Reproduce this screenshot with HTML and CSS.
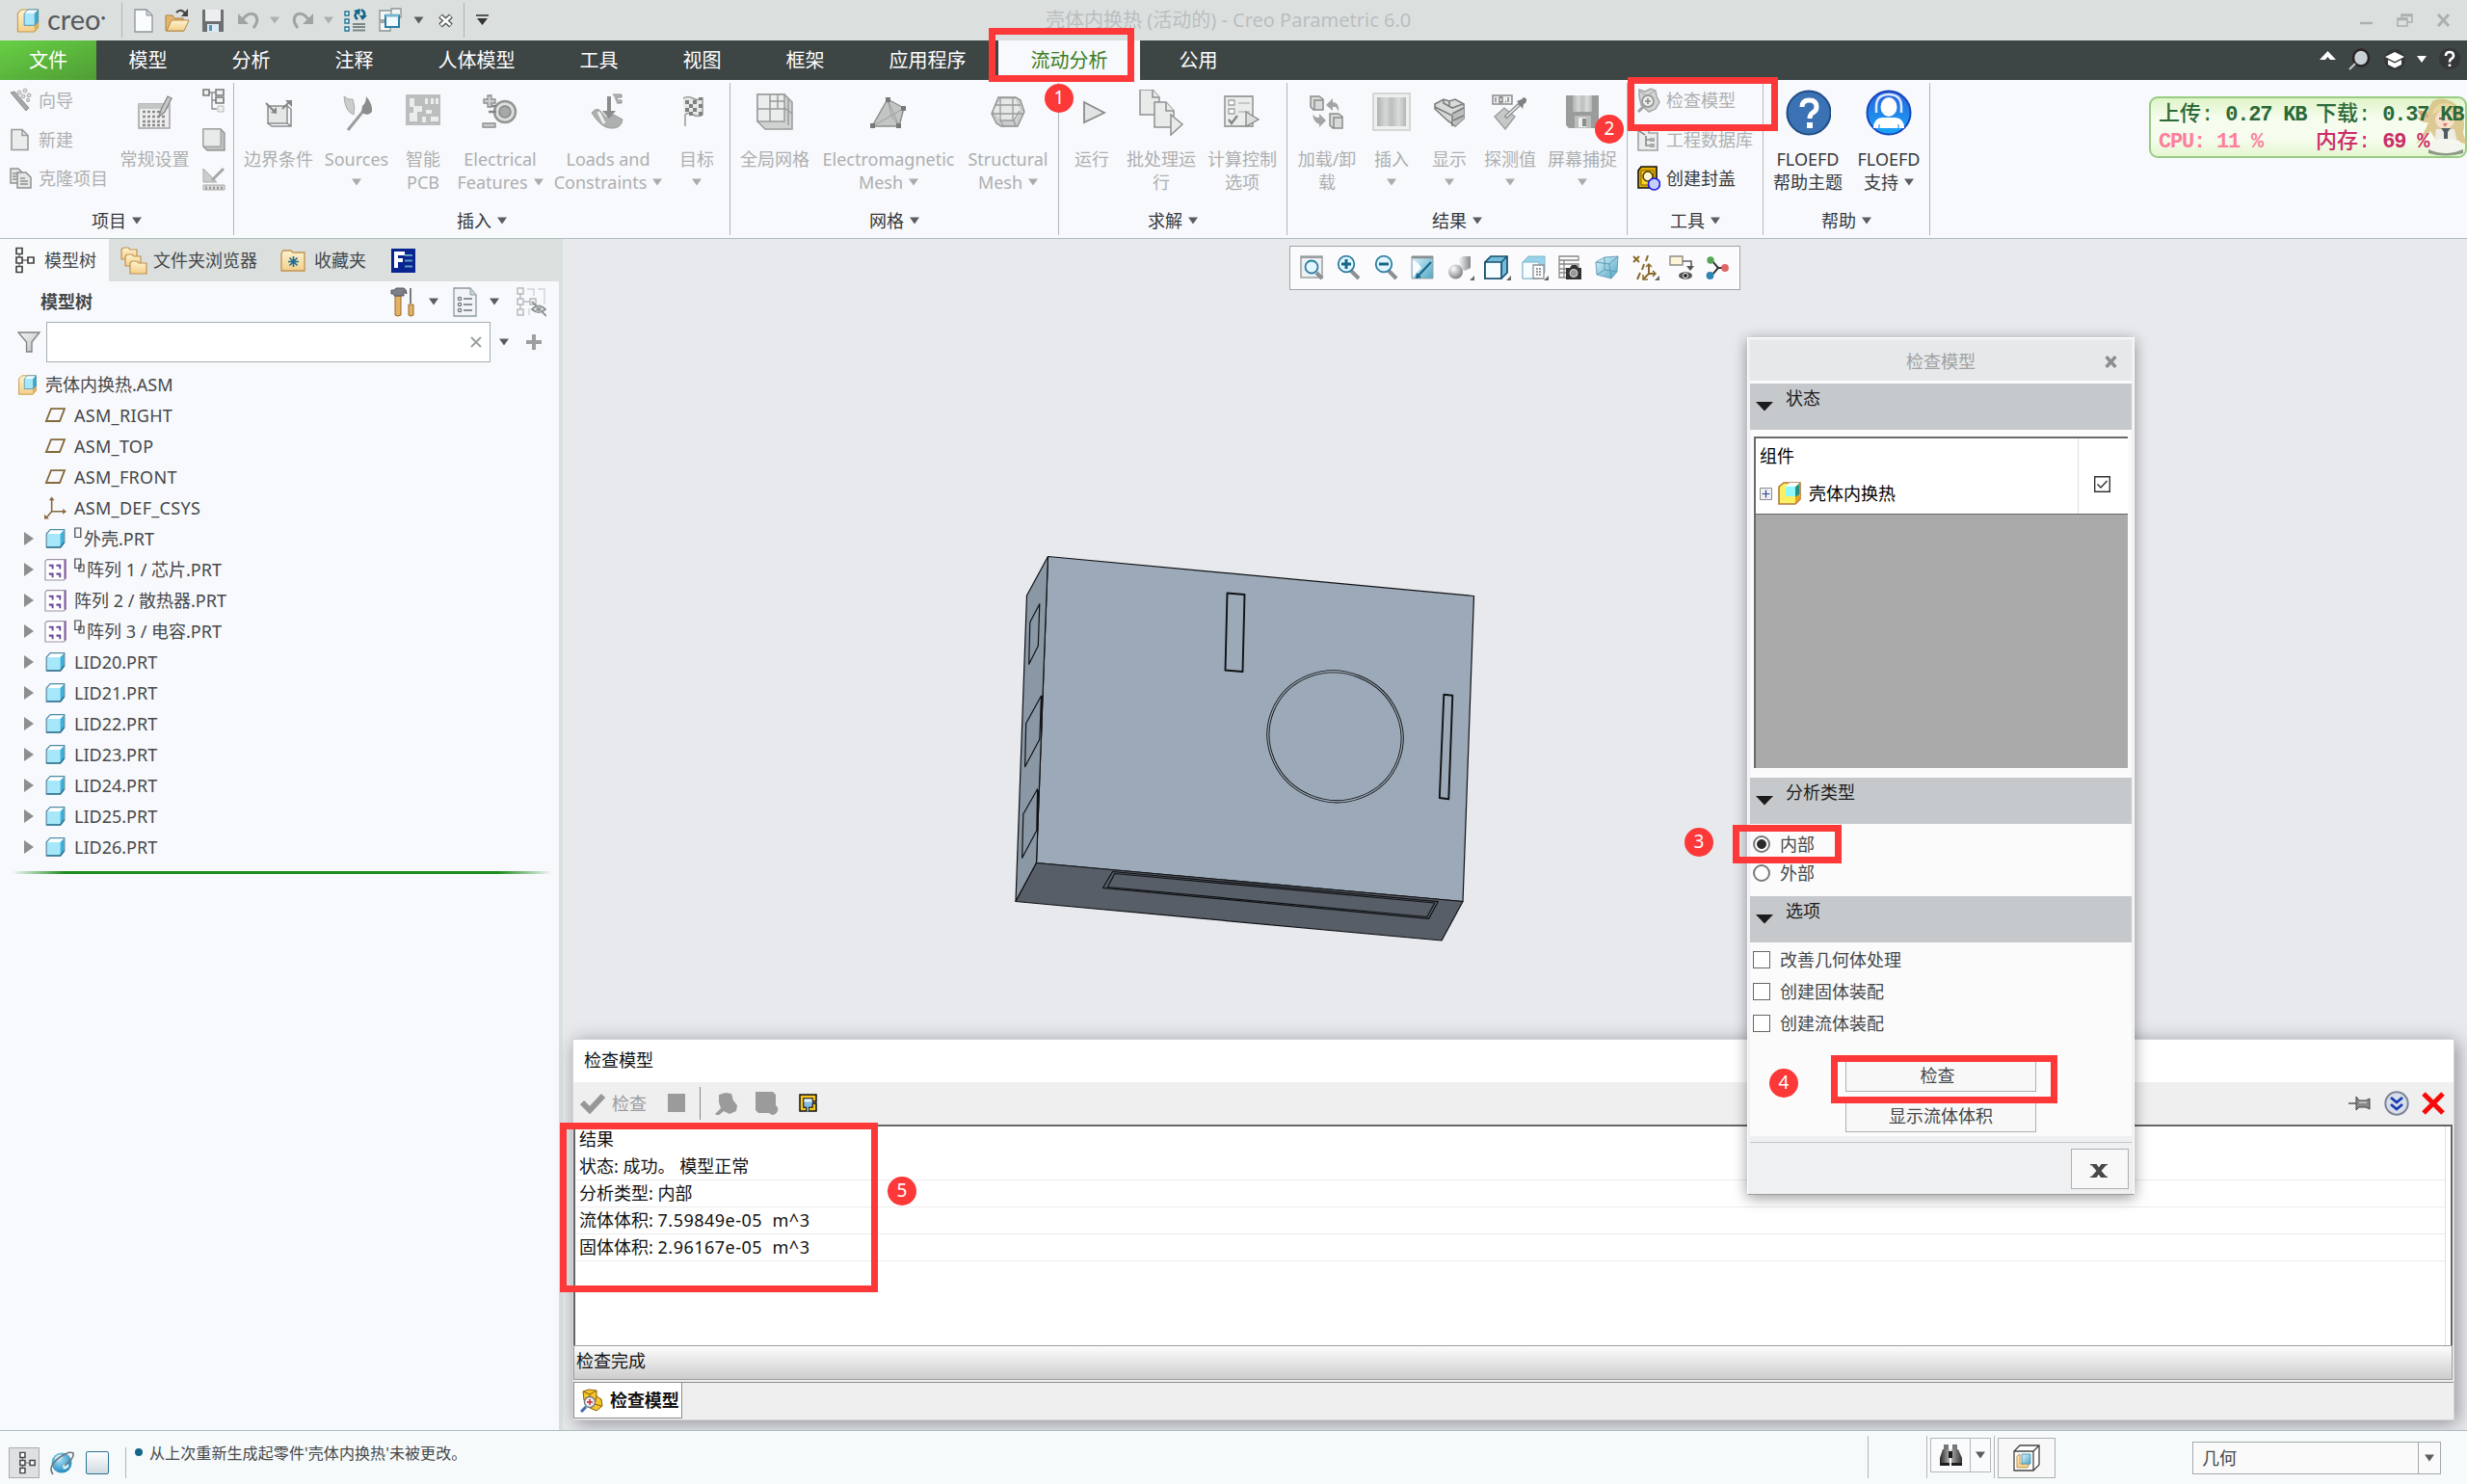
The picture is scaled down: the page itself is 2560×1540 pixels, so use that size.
FILE: index.html
```html
<!DOCTYPE html>
<html lang="zh-CN">
<head>
<meta charset="utf-8">
<title>壳体内换热 (活动的) - Creo Parametric 6.0</title>
<link rel="stylesheet" href="styles.css">
</head>
<body>
<svg class="defs" width="0" height="0">
  <defs>
    <linearGradient id="gGold" x1="0" y1="0" x2="0" y2="1"><stop offset="0" stop-color="#fff3d0"/><stop offset="1" stop-color="#f3cf8a"/></linearGradient>
    <linearGradient id="gGrey" x1="0" y1="0" x2="1" y2="1"><stop offset="0" stop-color="#f4f4f4"/><stop offset="1" stop-color="#bcbebe"/></linearGradient>
    <linearGradient id="gDark" x1="0" y1="0" x2="1" y2="0"><stop offset="0" stop-color="#222"/><stop offset=".45" stop-color="#bbb"/><stop offset="1" stop-color="#333"/></linearGradient>
    <linearGradient id="gBlue" x1="0" y1="0" x2="1" y2="1"><stop offset="0" stop-color="#dff3fa"/><stop offset="1" stop-color="#4fa6c6"/></linearGradient>
    <linearGradient id="gPane" x1="0" y1="0" x2="1" y2="0"><stop offset="0" stop-color="#b0b2b2"/><stop offset=".3" stop-color="#d6d8d8"/><stop offset=".5" stop-color="#bcbebe"/><stop offset=".75" stop-color="#dadcdc"/><stop offset="1" stop-color="#b4b6b6"/></linearGradient>
    <radialGradient id="gBall" cx=".35" cy=".3" r=".8"><stop offset="0" stop-color="#fff"/><stop offset="1" stop-color="#707476"/></radialGradient>
    <linearGradient id="gCyl" x1="0" y1="0" x2="1" y2="0"><stop offset="0" stop-color="#fff"/><stop offset="1" stop-color="#85898b"/></linearGradient>
    <linearGradient id="gUser" x1="0" y1="0" x2="0" y2="1"><stop offset="0" stop-color="#2a62da"/><stop offset="1" stop-color="#18a6fa"/></linearGradient>
    <radialGradient id="gGlobe" cx=".4" cy=".35" r=".7"><stop offset="0" stop-color="#a8e0f8"/><stop offset="1" stop-color="#1b84b8"/></radialGradient>
  </defs>
  <symbol id="down" viewBox="0 0 10 8"><path d="M0 .5h10L5 7.5z" fill="currentColor"/></symbol>
  <symbol id="right" viewBox="0 0 10 14"><path d="M0 0v14l10-7z" fill="#8c8e90"/></symbol>
  <symbol id="asm" viewBox="0 0 24 26"><path d="M1 5l4-4h18v19l-4 5H1z" fill="url(#gGold)" stroke="#c89a4c" stroke-width="1.2"/><path d="M19 25l4-5V4l-4 3z" fill="#dfae5c"/><path d="M8 5l4-4h11l-4 4z" fill="#f2fbff"/><path d="M8 5h11v13H8z" fill="#a8e6fb"/><path d="M19 5l4-4v13l-4 4z" fill="#3fa9d0"/><path d="M8 5l4-4h11v13l-4 4H8z" fill="none" stroke="#3a90b4" stroke-width=".9"/></symbol>
  <symbol id="cube" viewBox="0 0 20 20"><path d="M1 5l4-4h14l-4 4z" fill="#fff"/><path d="M1 5h14v14H1z" fill="#a6e8fa"/><path d="M15 5l4-4v13l-4 5z" fill="#3fb0da"/><path d="M.7 5l4-4.3h14.600v13.300l-4 5.200H.7z" fill="none" stroke="#4d8aa5" stroke-width="1.2"/><path d="M1 18.800h14l4-5" fill="none" stroke="#2a6d8c" stroke-width="1.300"/></symbol>
  <symbol id="plane" viewBox="0 0 22 16"><path d="M6.500 1.200h14L15.500 14H1.400z" fill="none" stroke="#84693a" stroke-width="1.800"/></symbol>
  <symbol id="pattern" viewBox="0 0 24 24"><path d="M1 2.500L3 .7h20.300v20L21.500 23H1z" fill="#fff" stroke="#9c94a6" stroke-width="1.200"/><path d="M22.300 1v20.500" stroke="#8863a8" stroke-width="2"/><path d="M5 6h5v5H8V8H5zM13 6h5v5h-2V8h-3zM5 15h5v5H8v-2.500H5zM13 15h5v5h-2v-2.500h-3z" fill="#6b489c"/></symbol>
  <symbol id="treeico" viewBox="0 0 20 28"><path d="M4 6v16M4 14h9" stroke="#777" fill="none" stroke-width="1.300"/><path d="M1 1.500h6v6H1zM1 11h6v6H1zM1 20.500h6v6H1zM13 11h6v6h-6z" fill="#fff" stroke="#444" stroke-width="1.700"/></symbol>
</svg>

<div class="app">
  <header class="titlebar">
    <div class="brand"><svg width="24" height="25"><use href="#asm"/></svg><span class="brand-name">creo<i>•</i></span></div>
    <div class="quick">
      <svg width="20" height="25" viewBox="0 0 20 25"><path d="M1 1h12l6 6v17H1z" fill="#fbfcfd" stroke="#8b9599" stroke-width="1.300"/><path d="M13 1v6h6z" fill="#ccd6da" stroke="#8b9599"/></svg>
      <svg width="26" height="26" viewBox="0 0 26 26"><path d="M1 24V8h7l2 3h9v13z" fill="#e4b66d" stroke="#ab7d3c"/><path d="M2 24l5-11h18l-5 11z" fill="url(#gGold)" stroke="#b4874a"/><path d="M12 5q5-5 9 1" fill="none" stroke="#444" stroke-width="2.200"/><path d="M24 1v8h-7z" fill="#444"/></svg>
      <svg width="24" height="25" viewBox="0 0 24 25"><path d="M1 1h22v23H1z" fill="#6c7072"/><path d="M4 1h16v12H4z" fill="#eceeef"/><path d="M6 16h12v8H6z" fill="#dcebf2"/><path d="M8 17h3v6H8z" fill="#5095ba"/></svg>
      <svg width="24" height="20" viewBox="0 0 24 20"><path d="M6 9Q12 1 18 4q6 5-1 14" fill="none" stroke="#a0a4a5" stroke-width="3"/><path d="M1 3v11h11z" fill="#a0a4a5"/></svg>
      <svg class="dim" width="10" height="8"><use href="#down"/></svg>
      <svg width="24" height="20" viewBox="0 0 24 20"><path d="M18 9Q12 1 6 4q-6 5 1 14" fill="none" stroke="#a0a4a5" stroke-width="3"/><path d="M23 3v11H12z" fill="#a0a4a5"/></svg>
      <svg class="dim" width="10" height="8"><use href="#down"/></svg>
      <svg width="24" height="26" viewBox="0 0 24 26"><path d="M1 4h4v4H1zM1 12h4v4H1zM1 20h4v4H1z" fill="#eef8fc" stroke="#1d7399" stroke-width="1.400"/><path d="M9 17h13M9 20h13M9 23.500h13" stroke="#7c8587" stroke-width="1.800"/><path d="M14 12q-5-4 0-8M18 2q5 3 2 8" fill="none" stroke="#15658a" stroke-width="2.600"/><path d="M10 3l7-2-1 7zM16 8h8l-5 5z" fill="#15658a" /></svg>
      <svg width="24" height="26" viewBox="0 0 24 26"><path d="M1 3h12v10H1zM13 1h10v9H13zM1 15h11v9H1z" fill="#f4f6f6" stroke="#8b9294" stroke-width="1.300"/><path d="M7 8h14v12H7z" fill="#f2fbff" stroke="#2b7ea3" stroke-width="2"/><path d="M7 8h14" stroke="#76b5d0" stroke-width="3"/></svg>
      <svg class="mid" width="11" height="8"><use href="#down"/></svg>
      <svg width="17" height="15" viewBox="0 0 17 15"><path d="M3 2.500l11 10M14 2.500l-11 10" stroke="#55595b" stroke-width="5.500"/><path d="M3.500 3l10 9M13.500 3l-10 9" stroke="#fff" stroke-width="2.600"/></svg>
      <span class="quick-end"><svg width="13" height="12" viewBox="0 0 13 12"><path d="M0 1h13" stroke="#333" stroke-width="1.600"/><path d="M1 4h11l-5.500 7z" fill="#333"/></svg></span>
    </div>
    <h1 class="title">壳体内换热 (活动的) - Creo Parametric 6.0</h1>
    <svg class="winctl" width="96" height="16" viewBox="0 0 96 16" fill="none" stroke="#abb0b1"><path d="M1 11h13" stroke-width="2.500"/><path d="M40 6h10v8H40zM44 6V2h11v8h-5M40 7.500h10M44 3.500h11" stroke-width="1.500"/><path d="M82 2l11 12M93 2L82 14" stroke-width="3"/></svg>
  </header>

  <nav class="menubar">
    <span class="tab file">文件</span><span class="tab">模型</span><span class="tab">分析</span><span class="tab">注释</span><span class="tab">人体模型</span><span class="tab">工具</span><span class="tab">视图</span><span class="tab">框架</span><span class="tab">应用程序</span><span class="tab active">流动分析</span><span class="tab">公用</span>
    <svg class="menu-tools" width="150" height="30" viewBox="2405 48 150 30"><path d="M2407 62l8.500-9 8.500 9h-6l-2.500-3-2.500 3z" fill="#fff"/><ellipse cx="2450" cy="60" rx="8" ry="8.500" fill="#c8d2d6" stroke="#2a2225" stroke-width="2.500"/><path d="M2444 66l-6 6" stroke="#c8caca" stroke-width="2"/><circle cx="2485" cy="62" r="11" fill="#353839"/><path d="M2475 59l10-5 10 5-10 5zM2478 62l7 3.500 7-3.500v5l-7 3.500-7-3.500z" fill="#fff"/><path d="M2508 58h10l-5 7z" fill="#fff"/><circle cx="2542" cy="61" r="11" fill="#343637"/><path d="M2538 58q0-4 4-4t4 4q0 2-3 3.500-1 1-1 3M2542 66.500v2.500" fill="none" stroke="#fff" stroke-width="2.600"/></svg>
  </nav>

  <section class="ribbon">
    <div class="group project">
      <div class="body">
        <div class="stack">
          <div class="mini"><svg width="24" height="26" viewBox="0 0 24 26"><path d="M1 5l4-1 15 17-3 3z" fill="#a6a8a8" stroke="#8b8d8d"/><g fill="#ddd" stroke="#aaa"><circle cx="10" cy="5" r="2"/><circle cx="16" cy="3" r="2"/><circle cx="20" cy="8" r="2"/><circle cx="14" cy="9" r="2"/><circle cx="19" cy="13" r="1.600"/></g></svg>向导</div>
          <div class="mini"><svg width="24" height="24" viewBox="0 0 24 24"><path d="M2 1.500h11l6 6v15H2z" fill="#ebecec" stroke="#999b9b" stroke-width="1.600"/><path d="M13 1.500v6h6" fill="none" stroke="#999b9b" stroke-width="1.400"/></svg>新建</div>
          <div class="mini"><svg width="24" height="24" viewBox="0 0 24 24"><g fill="#e6e7e7" stroke="#8f9191" stroke-width="1.500"><path d="M1 2h8l4 4v11H1z"/><path d="M8 6h9l5 5v11H8z"/></g><path d="M3 7h5M3 10h4M3 13h4M11 12h5M11 15h8M11 18h8" stroke="#8f9191" stroke-width="1.300"/></svg>克隆项目</div>
        </div>
        <div class="big"><svg viewBox="-24 -24 48 48"><path d="M-17-9h32v25h-32z" fill="#eee" stroke="#a0a2a2" stroke-width="1.500"/><path d="M-17-9h32v5h-32z" fill="#c4c6c6"/><path d="M-13-1h24M-13 4h24M-13 9h24M-13 13h24" stroke="#8b8d8d" stroke-width="2.600" stroke-dasharray="3 2"/><path d="M4 4l2-7 7-14 4 2-7 14z" fill="#c8caca" stroke="#858787" stroke-width="1.300"/></svg><b>常规设置</b></div>
        <div class="stack icons">
          <svg width="24" height="25" viewBox="0 0 24 25"><path d="M7 4h6M10 4v17h5M10 12h5" fill="none" stroke="#8b8d8d" stroke-width="1.400"/><path d="M1 1h6v6H1zM14 1h8v6h-8zM14 9h8v6h-8z" fill="#eee" stroke="#777979" stroke-width="1.600"/><path d="M16 18h6v6h-6z" fill="#eee" stroke="#bbb"/></svg>
          <svg width="24" height="24" viewBox="0 0 24 24"><path d="M1 1h18l4 4v18H5l-4-4z" fill="#bfc1c1" stroke="#949696" stroke-width="1.400"/><path d="M1 1h18v18H1z" fill="#e9eaea" stroke="#949696"/></svg>
          <svg width="24" height="25" viewBox="0 0 24 25"><path d="M1 2v14h14z" fill="#ccc" stroke="#aaa"/><path d="M10 14L22 2" stroke="#a6a8a8" stroke-width="3"/><path d="M1 19h22v5H1z" fill="#ddd" stroke="#a6a8a8"/><path d="M3 22h18" stroke="#999" stroke-width="3" stroke-dasharray="2 2"/></svg>
        </div>
      </div>
      <div class="caption">项目<svg><use href="#down"/></svg></div>
    </div>

    <div class="group insert">
      <div class="body">
        <div class="big"><svg viewBox="-24 -24 48 48"><path d="M-11-7H9v18h-20z" fill="#e6e7e7" stroke="#8b8d8d" stroke-width="1.500"/><path d="M9-7l4 3v18H-7l-4-3M9 11l4 3" fill="none" stroke="#8b8d8d" stroke-width="1.500"/><path d="M-13-10L-4-1M4-4l8-8" stroke="#858787" stroke-width="2"/><path d="M-2 1v-7l-6 6zM14-13H7l7 7z" fill="#858787"/></svg><b>边界条件</b></div>
        <div class="big"><svg viewBox="-24 -24 48 48"><path d="M-13-17q4 4 9 3 3 8 1 16-9-3-10-19z" fill="#cbcdcd" stroke="#aaacac"/><path d="M-9 18L8-3" stroke="#9b9d9d" stroke-width="3"/><path d="M6-7q4-3 4-10 7 8 6 16-5 6-11 0z" fill="#8b8d8d"/></svg><b>Sources</b><svg class="arrow"><use href="#down"/></svg></div>
        <div class="big"><svg viewBox="-24 -24 48 48"><path d="M-18-19h36v32h-36z" fill="#bcbebe"/><path d="M-14-15h5v8h8v6h-5v10h-8V0h4v-6h-4zM2-15h3v6H2zM8-15h3v6H8zM13-15h3v6h-3zM3-3h6v4H3zM8 4h8v5H8zM-1 4h4v6h-4z" fill="#ebecec"/></svg><b>智能</b><b>PCB</b></div>
        <div class="big"><svg viewBox="-24 -24 48 48"><circle cx="5" cy="-1" r="11" fill="#dcdede" stroke="#939595" stroke-width="2.500"/><circle cx="5" cy="-1" r="6" fill="#a6a8a8" stroke="#858787" stroke-width="1.500"/><path d="M-12-7h8M-12-1h8" stroke="#858787" stroke-width="2.500"/><path d="M-13-18h4v4h4v4h-4v4h-4v-4h-4v-4h4zM-18 11h13v4h-13z" fill="#ccc" stroke="#8b8d8d" stroke-width="1.300"/></svg><b>Electrical</b><b>Features<svg class="arrow"><use href="#down"/></svg></b></div>
        <div class="big"><svg viewBox="-24 -24 48 48"><path d="M-17 0q5-6 9-2l6 7 8-3 9 5q-1 10-13 9-10-1-19-16z" fill="#aeb0b0" stroke="#999b9b"/><path d="M-10-1l6 12" stroke="#eee" stroke-width="3"/><path d="M-1-17h4v15h5L1 6l-7-8h5z" fill="#8b8d8d"/><path d="M5-19h9v3H9v3h5v3H9" fill="#b6b8b8" stroke="#8b8d8d"/></svg><b>Loads and</b><b>Constraints<svg class="arrow"><use href="#down"/></svg></b></div>
        <div class="big"><svg viewBox="-24 -24 48 48"><path d="M-14-15q5-3 10 0t10 0V2q-5 3-10 0t-8 0v12" fill="#e6e7e7" stroke="#999b9b" stroke-width="1.500"/><path d="M-12-13h4v4h-4zM-4-13h4v4h-4zM2-9h4v4H2zM-8-9h4v4h-4zM-12-5h4v4h-4zM-4-5h4v4h-4zM2-1h4v4H2zM-8-1h4v4h-4zM2-16h4v3H2z" fill="#7f8181"/></svg><b>目标</b><svg class="arrow"><use href="#down"/></svg></div>
      </div>
      <div class="caption">插入<svg><use href="#down"/></svg></div>
    </div>

    <div class="group mesh">
      <div class="body">
        <div class="big"><svg viewBox="-24 -24 48 48"><path d="M-18-19h28l8 8v28h-28l-8-8z" fill="#d0d2d2" stroke="#999b9b" stroke-width="1.500"/><path d="M-18-19h28V9h-28z" fill="#ebecec" stroke="#999b9b" stroke-width="1.500"/><path d="M-5-19V9M-18-4h28M3-19v15M-5-12h15M14-15v28M10-5l8 6" stroke="#999b9b" fill="none" stroke-width="1.500"/></svg><b>全局网格</b></div>
        <div class="big"><svg viewBox="-24 -24 48 48"><path d="M-1-14L16-5 11 14h-28z" fill="#c3c5c5" stroke="#8b8d8d" stroke-width="1.400"/><path d="M-1-14L3 3l13-8M3 3l8 11M3 3l-20 11M-1-14l12 28" fill="none" stroke="#9c9e9e"/><path d="M-3-16h5v5h-5zM13-7h5v5h-5zM8 11h5v5H8zM-19 11h5v5h-5z" fill="#777979"/></svg><b>Electromagnetic</b><b>Mesh<svg class="arrow"><use href="#down"/></svg></b></div>
        <div class="big"><svg viewBox="-24 -24 48 48"><path d="M-10-16H8l5 3 4 12-7 15H-7l-5-3-5-10z" fill="#ccc" stroke="#8b8d8d" stroke-width="1.300"/><path d="M-8-14H8l5 12-5 10H-8l-7-10z" fill="#e6e7e7"/><path d="M-8-15V8M5-15V8M-14-8h27M-16 1h32M-8 8H6l6-10M-8 8l4 7M6 8l2 6" fill="none" stroke="#999b9b" stroke-width="1.300"/></svg><b>Structural</b><b>Mesh<svg class="arrow"><use href="#down"/></svg></b></div>
      </div>
      <div class="caption">网格<svg><use href="#down"/></svg></div>
    </div>

    <div class="group solve">
      <div class="body">
        <div class="big"><svg viewBox="-24 -24 48 48"><path d="M-8-11L13 0-8 10z" fill="#e2e3e3" stroke="#8b8d8d" stroke-width="1.800"/></svg><b>运行</b></div>
        <div class="big"><svg viewBox="-24 -24 48 48"><g fill="#e9eaea" stroke="#8f9191" stroke-width="1.500"><path d="M-22-24h13l7 8v18h-20z"/><path d="M-9-24v8h7M-7-11H5l8 9v17H-7z"/><path d="M5-11v9h8M10 2l12 10-12 11z"/></g></svg><b>批处理运</b><b>行</b></div>
        <div class="big"><svg viewBox="-24 -24 48 48"><path d="M-18-17h29v31h-29z" fill="#ebecec" stroke="#a0a2a2" stroke-width="1.800"/><path d="M-14-13h6v5h-6zM-14-4h6v5h-6z" fill="#fff" stroke="#a0a2a2" stroke-width="1.300"/><path d="M-4-10H8M-4-1H8" stroke="#bbb" stroke-width="1.400"/><path d="M-14 7l3 4 6-8" fill="none" stroke="#858787" stroke-width="2.300"/><path d="M4-1l13 8-13 7z" fill="#ddd" stroke="#8b8d8d" stroke-width="1.400"/></svg><b>计算控制</b><b>选项</b></div>
      </div>
      <div class="caption">求解<svg><use href="#down"/></svg></div>
    </div>

    <div class="group results">
      <div class="body">
        <div class="big"><svg viewBox="-24 -24 48 48"><g fill="#d8dada" stroke="#8b8d8d" stroke-width="1.500"><path d="M-17-17h9l4 3v11h-10l-3-3zM-13-13h9v10h-9zM3 1h9l4 3v12H6l-3-3zM7 5h9v11H7z"/></g><path d="M-1-8l7-7v4q7 0 6 10-2-6-6-5v4zM-1 8l-7-7v4q-7 0-6-6-2 10 6 13v3z" fill="#a4a6a6"/></svg><b>加载/卸</b><b>载</b></div>
        <div class="big"><svg viewBox="-24 -24 48 48"><path d="M-19-20h38v38h-38z" fill="#eef0f0" stroke="#d5d7d7" stroke-width="2"/><path d="M-15-16h30v30h-30z" fill="url(#gPane)"/></svg><b>插入</b><svg class="arrow"><use href="#down"/></svg></div>
        <div class="big"><svg viewBox="-24 -24 48 48"><path d="M-15-9l9-5 6 2 6-2 9 5v15l-9 8-8-6-13-12z" fill="#d8dada" stroke="#7c7e7e" stroke-width="1.600"/><path d="M3 0l12-7v13l-9 8z" fill="#bbbdbd"/><path d="M-15-6L3 3v11M3 1l12-6M-6-14v4l9 5 11-4M0-12v5M4 8l11-5" fill="none" stroke="#7c7e7e" stroke-width="1.600"/></svg><b>显示</b><svg class="arrow"><use href="#down"/></svg></div>
        <div class="big"><svg viewBox="-24 -24 48 48"><path d="M-18-18H2v9h-20z" fill="#eee" stroke="#8b8d8d" stroke-width="1.500"/><path d="M-15-16v5M-11-16h3v5h-3zM-5-11.500h1M-2-16v5" stroke="#777" stroke-width="1.300" fill="none"/><path d="M-16 4L-6-5 5 4-5 17z" fill="#c6c8c8" stroke="#999b9b" stroke-width="1.300"/><path d="M-5 5L10-9" stroke="#8b8d8d" stroke-width="4"/><path d="M-4 4L9-8" stroke="#eee" stroke-width="1.500"/><path d="M7-12l5-2 2-2q5 1 2 6l-2 1-1 5z" fill="#7f8181"/></svg><b>探测值</b><svg class="arrow"><use href="#down"/></svg></div>
        <div class="big"><svg viewBox="-24 -24 48 48"><path d="M-17-18h34v34h-31l-3-3z" fill="#9a9c9c"/><path d="M-10-18H10v17h-20z" fill="url(#gPane)"/><path d="M-8 3H9v13H-8z" fill="#bcbebe"/><path d="M-4 5h8v10h-8z" fill="#eee"/><path d="M0 6h4v8H0z" fill="#8b8d8d"/></svg><b>屏幕捕捉</b><svg class="arrow"><use href="#down"/></svg></div>
      </div>
      <div class="caption">结果<svg><use href="#down"/></svg></div>
    </div>

    <div class="group tools">
      <div class="body">
        <div class="stack">
          <div class="mini"><svg width="24" height="26" viewBox="0 0 24 26"><path d="M2 2l6 2 6-3 5 2 1 6 3 6-4 7-7 3-8-7-2-9z" fill="#d2d4d4" stroke="#a6a8a8" stroke-width="1.500"/><path d="M3 4l7 5 8-6M10 9v6" stroke="#b0b2b2" fill="none" stroke-width="1.300"/><circle cx="11" cy="14" r="6" fill="#eee" stroke="#979999" stroke-width="1.800"/><path d="M8 14h6M11 11v6" stroke="#888" stroke-width="1.600"/><path d="M7 19l-6 6" stroke="#a0a2a2" stroke-width="3"/></svg>检查模型</div>
          <div class="mini"><svg width="24" height="24" viewBox="0 0 24 24"><path d="M1 2h11v3h9v18H1z" fill="#ebecec" stroke="#a0a2a2" stroke-width="1.600"/><path d="M2 3l6 4" stroke="#777" stroke-width="1.500"/><path d="M9 8v10h5M9 12h5" stroke="#8b8d8d" fill="none" stroke-width="1.700"/><path d="M13 10h5v4h-5zM13 16h5v4h-5z" fill="#aaa"/></svg>工程数据库</div>
          <div class="mini dark"><svg width="24" height="26" viewBox="0 0 24 26"><path d="M1 5l3-4h16v17l-3 5H1z" fill="#e4ac00" stroke="#111" stroke-width="1.600"/><path d="M4 5h13v15H4z" fill="#fbd52c" stroke="#7c5b00"/><circle cx="11" cy="11" r="5" fill="#fff7d0" stroke="#4a3a00" stroke-width="1.500"/><circle cx="17.500" cy="19" r="6" fill="#c5cdfa" stroke="#1212ee" stroke-width="1.600"/></svg>创建封盖</div>
        </div>
      </div>
      <div class="caption">工具<svg><use href="#down"/></svg></div>
    </div>

    <div class="group help">
      <div class="body">
        <div class="big dark"><svg viewBox="-25 -24 48 48"><circle r="22.500" fill="#3a72b4" stroke="#1f4c86" stroke-width="2"/><path d="M-7-6q0-7 7.500-7T8-6q0 4-4 6-3 2-3 6" fill="none" stroke="#fff" stroke-width="5"/><path d="M-2 10h6v6h-6z" fill="#fff"/></svg><b>FLOEFD</b><b>帮助主题</b></div>
        <div class="big dark"><svg viewBox="-24 -24 48 48"><circle r="22.500" fill="url(#gUser)" stroke="#1745bd" stroke-width="2"/><path d="M-13 0v-6q0-13 13-13T13-6v6" fill="none" stroke="#dce9ff" stroke-width="2.500"/><ellipse cy="-6" rx="8.500" ry="10" fill="#fff"/><path d="M-16 16q0-10 9-11h14q9 1 9 11z" fill="#fff"/><path d="M-10 16v-4M10 16v-4" stroke="#38a2f4" stroke-width="1.300"/></svg><b>FLOEFD</b><b>支持<svg class="arrow"><use href="#down"/></svg></b></div>
      </div>
      <div class="caption">帮助<svg><use href="#down"/></svg></div>
    </div>
  </section>

  <main class="workspace">
    <aside class="sidebar">
      <div class="side-tabs">
        <span class="side-tab on"><svg width="20" height="28"><use href="#treeico"/></svg>模型树</span>
        <span class="side-tab folders"><svg width="28" height="29" viewBox="0 0 28 29"><g fill="url(#gGold)" stroke="#c0924f" stroke-width="1.200"><path d="M1 3l2-2h5l2 2h7v10H1z"/><path d="M5 10l2-2h5l2 2h7v10H5z"/><path d="M10 17l2-2h5l2 2h8v11H10z"/></g></svg>文件夹浏览器</span>
        <span class="side-tab favs"><svg width="26" height="24" viewBox="0 0 26 24"><path d="M1 5l2-3h8l2 2h12v19H1z" fill="url(#gGold)" stroke="#c0924f" stroke-width="1.300"/><path d="M13.500 8v11M8 13.500h11M9.500 9.500l8 8M17.500 9.500l-8 8" stroke="#1d6c93" stroke-width="1.600"/></svg>收藏夹</span>
        <svg class="fe" width="25" height="25" viewBox="0 0 25 25"><path d="M0 0h25v25H0z" fill="#0a2490"/><path d="M5 20V5h9M5 12h7" fill="none" stroke="#fff" stroke-width="4"/><path d="M14 7h8M14 12.500h8M14 18.500h8" stroke="#5aa0c0" stroke-width="2.200"/></svg>
      </div>
      <div class="side-head"><strong>模型树</strong>
        <svg width="26" height="31" viewBox="0 0 26 31"><path d="M5 9h6v20q-3 2-6 0z" fill="#e3b266" stroke="#96682a"/><path d="M1 3h3l2-2h8q3 1 3 6l-3-2v4H4V7H1z" fill="#7c8088" stroke="#555960"/><path d="M21 1v16" stroke="#777b80" stroke-width="2"/><path d="M19 18h5v11q-2 2-5 0z" fill="#e3b266" stroke="#96682a"/></svg>
        <svg class="mid a1" width="10" height="8"><use href="#down"/></svg>
        <svg class="listico" width="25" height="31" viewBox="0 0 25 31"><path d="M1 1h17l6 7v22H1z" fill="#f2f5f7" stroke="#8e9aa0" stroke-width="1.300"/><path d="M18 1v7h6" fill="#ccd4d8" stroke="#8e9aa0"/><g fill="none" stroke="#6c7375" stroke-width="1.200"><circle cx="7" cy="12" r="1.700"/><circle cx="7" cy="18" r="1.700"/><circle cx="7" cy="24" r="1.700"/></g><path d="M11 12h9M11 18h9M11 24h9" stroke="#6c7375" stroke-width="1.600"/></svg>
        <svg class="mid a2" width="10" height="8"><use href="#down"/></svg>
        <svg class="hideico" width="31" height="31" viewBox="0 0 31 31" fill="none" stroke="#b4b9ba" stroke-width="1.400"><path d="M1 1h6v6H1zM1 12h6v6H1zM1 23h6v6H1zM14 12h6v6h-6zM7 15h7M4 7v5M4 18v5"/><path d="M11 2h7v7M22 2h7v16M13 22v7" stroke="#d0d4d5"/><path d="M16 23q7-7 14 0-7 6-14 0zM16 15l15 15" stroke="#8c9192" stroke-width="1.800"/><circle cx="23" cy="23" r="2.500" fill="#8c9192"/></svg>
      </div>
      <div class="filter">
        <svg width="24" height="22" viewBox="0 0 24 22"><path d="M1 1h22l-8 10v10H9.500V11z" fill="url(#gGrey)" stroke="#7c8284" stroke-width="1.300"/></svg>
        <div class="field"><svg width="12" height="12" viewBox="0 0 12 12"><path d="M1 1l10 10M11 1L1 11" stroke="#9b9fa0" stroke-width="1.800"/></svg></div>
        <svg class="mid" width="10" height="8"><use href="#down"/></svg>
        <svg class="plus" width="16" height="16" viewBox="0 0 16 16"><path d="M8 0v16M0 8h16" stroke="#9b9fa0" stroke-width="4"/></svg>
      </div>
      <ul class="tree">
        <li class="root"><svg width="21" height="21"><use href="#asm"/></svg>壳体内换热.ASM</li>
        <li class="datum"><svg class="ico" height="16"><use href="#plane"/></svg>ASM_RIGHT</li>
        <li class="datum"><svg class="ico" height="16"><use href="#plane"/></svg>ASM_TOP</li>
        <li class="datum"><svg class="ico" height="16"><use href="#plane"/></svg>ASM_FRONT</li>
        <li class="datum"><svg class="ico" height="25" viewBox="0 0 24 25"><path d="M8 2v14h14M8 16l-6 7" fill="none" stroke="#84693a" stroke-width="1.600"/><path d="M5 4l3-4 3 4zM20 13l4 3-4 3zM0 19v5h5z" fill="#84693a"/></svg>ASM_DEF_CSYS</li>
        <li class="exp"><svg class="tri"><use href="#right"/></svg><svg class="ico" height="20"><use href="#cube"/></svg><svg class="mk" width="8" height="20" viewBox="0 0 8 20"><path d="M.8 1h6v9.500h-6z" fill="none" stroke="#444" stroke-width="1.200"/></svg>外壳.PRT</li>
        <li class="exp"><svg class="tri"><use href="#right"/></svg><svg class="ico" height="25"><use href="#pattern"/></svg><svg class="mk wide" width="11" height="20" viewBox="0 0 11 20"><path d="M.8 1h6v9.500h-6zM5 7h5v7H5z" fill="#f8f9fc" stroke="#444" stroke-width="1.200"/></svg>阵列 1 / 芯片.PRT</li>
        <li class="exp"><svg class="tri"><use href="#right"/></svg><svg class="ico" height="25"><use href="#pattern"/></svg>阵列 2 / 散热器.PRT</li>
        <li class="exp"><svg class="tri"><use href="#right"/></svg><svg class="ico" height="25"><use href="#pattern"/></svg><svg class="mk wide" width="11" height="20" viewBox="0 0 11 20"><path d="M.8 1h6v9.500h-6zM5 7h5v7H5z" fill="#f8f9fc" stroke="#444" stroke-width="1.200"/></svg>阵列 3 / 电容.PRT</li>
        <li class="exp"><svg class="tri"><use href="#right"/></svg><svg class="ico" height="20"><use href="#cube"/></svg>LID20.PRT</li>
        <li class="exp"><svg class="tri"><use href="#right"/></svg><svg class="ico" height="20"><use href="#cube"/></svg>LID21.PRT</li>
        <li class="exp"><svg class="tri"><use href="#right"/></svg><svg class="ico" height="20"><use href="#cube"/></svg>LID22.PRT</li>
        <li class="exp"><svg class="tri"><use href="#right"/></svg><svg class="ico" height="20"><use href="#cube"/></svg>LID23.PRT</li>
        <li class="exp"><svg class="tri"><use href="#right"/></svg><svg class="ico" height="20"><use href="#cube"/></svg>LID24.PRT</li>
        <li class="exp"><svg class="tri"><use href="#right"/></svg><svg class="ico" height="20"><use href="#cube"/></svg>LID25.PRT</li>
        <li class="exp"><svg class="tri"><use href="#right"/></svg><svg class="ico" height="20"><use href="#cube"/></svg>LID26.PRT</li>
      </ul>
      <div class="insert-line"></div>
    </aside>

    <div class="viewport">
      <svg class="scene" viewBox="584 248 1976 1236" fill="none" stroke="#101214" stroke-width="1.200" stroke-linejoin="round">
        <path d="M1087.500 577.500L1529.500 618.500 1518 935.500 1075.500 895.500z" fill="#9ca9b8"/>
        <path d="M1087.500 577.500L1065.500 618 1054 935.500 1075.500 895.500z" fill="#8a97a5"/>
        <path d="M1054 935.500L1075.500 895.500 1518 935.500 1496 976z" fill="#585e68"/>
        <path d="M1273.500 615.500l18 1.500-2 80-18-1.500zM1498.300 720.700l9 1-4 107.500-9.500-1.200z" stroke-width="1.900"/>
        <ellipse cx="1385.500" cy="764.300" rx="71" ry="68" transform="rotate(22 1385.500 764.300)" stroke-width=".9"/>
        <ellipse cx="1385.500" cy="764.300" rx="68.800" ry="65.800" transform="rotate(22 1385.500 764.300)" stroke-width=".9"/>
        <path d="M1078.800 626.700l-10 19-1.100 43.600 9.600-19zM1080.500 722l-15.800 28.700-1.100 45 15.200-28.400zM1076.600 818.700L1061.800 845l-1.100 45.300 15.100-28.600zM1081.500 722l-1 45M1077.600 820l-1 42"/>
        <path d="M1154.600 904.500l337.700 31.200-9.600 17.600-338.100-32z"/>
        <path d="M1156.800 906.500l332 30.500-8 14.500-331.400-31z"/>
      </svg>

      <div class="viewbar">
        <svg viewBox="0 0 28 26"><path d="M1 1h22v22H1z" fill="#eef1f2" stroke="#9aa0a2" stroke-width="1.500"/><path d="M1 2h22" stroke="#9aa0a2" stroke-width="2"/><path d="M17 18l6 6" stroke="#8b9092" stroke-width="4"/><circle cx="12" cy="12" r="6.500" fill="#e4f6fd" stroke="#2b7ea3" stroke-width="1.800"/></svg>
        <svg viewBox="0 0 28 26"><path d="M14 15l9 9" stroke="#8b9092" stroke-width="4"/><circle cx="10" cy="9" r="8.300" fill="#e4f6fd" stroke="#2b7ea3" stroke-width="1.800"/><path d="M5 9h10M10 4v10" stroke="#15658a" stroke-width="3"/></svg>
        <svg viewBox="0 0 28 26"><path d="M14 15l9 9" stroke="#8b9092" stroke-width="4"/><circle cx="10" cy="9" r="8.300" fill="#e4f6fd" stroke="#2b7ea3" stroke-width="1.800"/><path d="M5 9h10" stroke="#15658a" stroke-width="3"/></svg>
        <svg viewBox="0 0 28 26"><path d="M1 1h22v23H1z" fill="url(#gBlue)" stroke="#9aa0a2"/><path d="M2 23V5q5 1 9 8z" fill="#f6fcff"/><path d="M21 7L6 23" stroke="#15658a" stroke-width="2.200"/><path d="M5 24l1-6 5 5z" fill="#15658a"/><path d="M1 2h22" stroke="#888e90" stroke-width="2.500"/></svg>
        <svg viewBox="0 0 28 26"><path d="M11 4l5-3h8v12l-6 3-7-3z" fill="url(#gCyl)"/><circle cx="8.500" cy="17" r="7.500" fill="url(#gBall)"/><path d="M28 21v5h-5z" fill="#666"/></svg>
        <svg viewBox="0 0 28 26"><path d="M1 7l6-6h17v17l-6 6H1z" fill="#73bddb" stroke="#15506e" stroke-width="1.700"/><path d="M1 7h17v17H1z" fill="#f7fcff" stroke="#15506e" stroke-width="1.700"/><path d="M18 7l6-6" stroke="#15506e" stroke-width="1.500"/><path d="M28 21v5h-5z" fill="#666"/></svg>
        <svg viewBox="0 0 28 26"><path d="M1 7l6-6h17v17l-6 6H1z" fill="#98d3ea" stroke="#7bb4ca"/><path d="M1 7h17v17H1z" fill="#f7fcff" stroke="#7bb4ca"/><path d="M12 10h11v14H12z" fill="#fff" stroke="#8b9092" stroke-width="1.300"/><path d="M15 14h6M15 17h6M15 20h6" stroke="#777" stroke-width="1.600" stroke-dasharray="2 1"/><path d="M28 21v5h-5z" fill="#666"/></svg>
        <svg viewBox="0 0 28 26"><path d="M1 1h20v4H1zM1 1v22h8M6 5v18M1 9h20v4M1 14h8M1 18h8" fill="#fff" stroke="#888" stroke-width="1.300"/><path d="M8 13h4l2-3h5l2 3h3v12H8z" fill="#333"/><circle cx="16" cy="18.500" r="4" fill="#999" stroke="#ddd"/></svg>
        <svg viewBox="0 0 28 26"><path d="M1 7l9-5 14-1-1 16-6 7-15-4z" fill="url(#gBlue)" stroke="#6aa3ba"/><path d="M1 7l14 2 9-8M15 9l2 15M10 2v13l13 2M10 15l-8 5" fill="none" stroke="#5b9bb5"/></svg>
        <svg viewBox="0 0 28 26" fill="none" stroke="#8a6a2c" stroke-width="2"><path d="M1 1l6 6M7 1L1 7M16 0l-2 6M12 9l-2 6M8 18l-3 7M17 10v9h7M17 19l-6 6"/><path d="M14 12l3-3 3 3M21 16l3 3-3 3M11 20v5h5" stroke-width="1.500"/><path d="M28 21v5h-5z" fill="#666" stroke="none"/></svg>
        <svg viewBox="0 0 28 26"><path d="M1 1h13v9H1z" fill="#fff4d8" stroke="#8d8c86" stroke-width="1.400"/><path d="M14 6h9v8" fill="none" stroke="#666" stroke-width="1.700"/><path d="M18 11l4 5 4-5z" fill="#555"/><ellipse cx="17" cy="21" rx="7" ry="3.800" fill="#555"/><circle cx="17" cy="21" r="2.500" fill="#222" stroke="#fff"/></svg>
        <svg viewBox="0 0 28 26"><path d="M6 5l7 8-7 8M13 13h8" fill="none" stroke="#333" stroke-width="2"/><circle cx="5" cy="5" r="3.700" fill="#57a556"/><circle cx="20" cy="13" r="3.900" fill="#e06565"/><circle cx="4.500" cy="21" r="3.900" fill="#2c86b5"/></svg>
      </div>

      <section class="dock">
        <div class="dock-title">检查模型</div>
        <div class="dock-tools">
          <svg width="26" height="22" viewBox="0 0 26 22"><path d="M2 10l8 8L24 3" fill="none" stroke="#979797" stroke-width="6"/></svg><span>检查</span>
          <i class="stop"></i><i class="bar"></i>
          <svg class="t1" width="24" height="24" viewBox="0 0 24 24" fill="#9b9b9b"><path d="M4 3l7-2 6 1 2 7 4 5-1 6-7 3-6-3-6 5-3-2 6-6-2-6z"/></svg>
          <svg class="t2" width="25" height="24" viewBox="0 0 25 24" fill="#9b9b9b"><path d="M1 0h18l3 3v11q3 2 2 6-2 4-6 4l-3-2H4l-3-3z"/></svg>
          <svg class="t3" width="19" height="19" viewBox="0 0 19 19"><path d="M1 1h17v7h-4V5H5v9h3v4H1zM10 18v-4h4v-4h4v8z" fill="#f6c61e" stroke="#111" stroke-width="1.500"/><path d="M5.500 5.500h8v8H10V18H8.500v-4.500h-3z" fill="#86bce8"/><path d="M5.500 5.500h8v3h-8z" fill="#e6f2fb"/></svg>
          <svg class="pin" width="24" height="18" viewBox="0 0 24 18"><path d="M0 9h9" stroke="#555" stroke-width="1.500"/><path d="M8 2l3 4h7l4-2v11l-4-2h-7l-3 3z" fill="#8a8a8a" stroke="#444"/><path d="M11 8h8" stroke="#eee"/></svg>
          <svg class="chev" width="26" height="26" viewBox="0 0 26 26"><circle cx="13" cy="13" r="11.700" fill="#d7dde9" stroke="#7c8597" stroke-width="2"/><path d="M7 7l6 5 6-5M7 14l6 5 6-5" fill="none" stroke="#173cb2" stroke-width="2.800"/></svg>
          <svg class="redx" width="24" height="24" viewBox="0 0 24 24"><path d="M2 2l20 20M22 2L2 22" stroke="#f80a0a" stroke-width="5"/></svg>
        </div>
        <div class="log"><div class="log-in"><p class="h">结果</p><p>状态: 成功。 模型正常</p><p>分析类型: 内部</p><p>流体体积: <span>7.59849e-05&nbsp; m^3</span></p><p>固体体积: <span>2.96167e-05&nbsp; m^3</span></p></div></div>
        <div class="dock-status">检查完成</div>
        <div class="dock-tabs"><div class="dock-tab"><svg width="24" height="25" viewBox="0 0 24 25"><path d="M3 3l6-2 8 1v6l5 3 1 7-6 5-7-3-6-8z" fill="#f4c62c" stroke="#8a5f00"/><path d="M3 3l7 3 7-4M10 6v7M17 8l-2 8 7 2" fill="none" stroke="#8a5f00"/><circle cx="10" cy="14" r="5.500" fill="#e8eefb" stroke="#777" stroke-width="1.400"/><path d="M7 14h6M10 11v6" stroke="#d22" stroke-width="1.500"/><path d="M6 19l-5 5" stroke="#3b66b8" stroke-width="3"/></svg>检查模型</div></div>
      </section>

      <section class="dialog">
        <div class="dlg-title">检查模型<svg width="13" height="13" viewBox="0 0 12 12"><path d="M1.500 1l9 10M10.500 1l-9 10" stroke="#8b8d8e" stroke-width="3.200"/></svg></div>
        <div class="dlg-body">
          <div class="sec"><svg width="18" height="10" viewBox="0 0 18 10"><path d="M0 0h18l-9 9.500z" fill="#1c1c1c"/></svg>状态</div>
          <div class="table">
            <div class="cells"><div class="c1"><p>组件</p><p class="r2"><svg width="13" height="13" viewBox="0 0 13 13"><path d="M.5.5h12v12H.5z" fill="#f0f0f2" stroke="#8c8c8c"/><path d="M2.500 6.500h8M6.500 2.500v8" stroke="#2a4a9a" stroke-width="1.200"/></svg><svg width="24" height="24" viewBox="0 0 24 24"><path d="M1 5l5-4h17v17l-5 5H1z" fill="#faf062" stroke="#b07a3c" stroke-width="1.600"/><path d="M18 22l5-5v-5l-5 4z" fill="#f0a010"/><path d="M8 5h10v10H8z" fill="#8ef8fa"/><path d="M18 5l4-3v11l-4 3z" fill="#24908e"/><path d="M8 5l4-4h10l-4 4z" fill="#fff"/></svg>壳体内换热</p></div><div class="c2"><svg width="17" height="17" viewBox="0 0 17 17"><path d="M.7.7h15.600v15.600H.7z" fill="#fff" stroke="#333" stroke-width="1.400"/><path d="M3.500 8.500l3.500 3.500L13.500 5" fill="none" stroke="#333" stroke-width="1.500"/></svg></div></div>
          </div>
          <div class="sec"><svg width="18" height="10" viewBox="0 0 18 10"><path d="M0 0h18l-9 9.500z" fill="#1c1c1c"/></svg>分析类型</div>
          <div class="radios">
            <label><i class="radio sel"></i>内部</label>
            <label><i class="radio"></i>外部</label>
          </div>
          <div class="sec"><svg width="18" height="10" viewBox="0 0 18 10"><path d="M0 0h18l-9 9.500z" fill="#1c1c1c"/></svg>选项</div>
          <div class="checks">
            <label><i class="box"></i>改善几何体处理</label>
            <label><i class="box"></i>创建固体装配</label>
            <label><i class="box"></i>创建流体装配</label>
          </div>
          <div class="actions"><div class="btn first">检查</div><div class="btn">显示流体体积</div></div>
        </div>
        <div class="dlg-foot"><div class="btn close"><svg width="18" height="14" viewBox="0 0 18 14"><path d="M0 0h6.500L9 3.500 11.500 0H18v1.200h-1.500L11.500 7l5 5.800H18V14h-7l-2.200-3.300L6.500 14H0v-1.200h1.500L6.500 7l-5-5.800H0z" fill="#484848"/></svg></div></div>
      </section>
    </div>
  </main>

  <footer class="status">
    <div class="st-left">
      <div class="st-btn"><svg width="17" height="24"><use href="#treeico"/></svg></div>
      <svg class="globe" width="26" height="26" viewBox="0 0 26 26"><circle cx="13" cy="13" r="10.500" fill="url(#gGlobe)"/><path d="M6 8q4-5 7-3t-2 5-5 1zM14 16q4-4 6-1t-5 5z" fill="#d3f0fb"/><path d="M4 25Q-2 17 10 8 21 0 25 3q1 6-9 13" fill="none" stroke="#6e7578" stroke-width="1.600"/></svg>
      <i class="pane"></i><i class="vsep"></i><i class="bullet"></i>
      <span class="msg">从上次重新生成起零件'壳体内换热'未被更改。</span>
    </div>
    <div class="st-right">
      <i class="ln"></i><i class="ln l2"></i>
      <div class="find"><span><svg width="25" height="24" viewBox="0 0 25 24"><path d="M5 1h5v5H5zM14 1h5v5h-5z" fill="#777"/><path d="M4 6h7v17H1V15zM13 6h7l4 9v8H13z" fill="url(#gDark)"/><path d="M10 8h4v7h-4zM1 20h10v3H1zM13 20h11v3H13z" fill="#1d1d1d"/></svg></span><em><svg class="mid" width="10" height="8"><use href="#down"/></svg></em></div>
      <i class="ln l3"></i>
      <div class="viewbtn"><svg width="28" height="28" viewBox="0 0 28 28"><path d="M1 7l6-6h20v20l-6 6H1zM1 7h20v20M21 7l6-6" fill="#fff" stroke="#444" stroke-width="1.300"/><path d="M4 12l3-2v10h10l-2 4H4z" fill="url(#gGold)" stroke="#c0924f"/><path d="M9 10h9v10H9z" fill="url(#gBlue)" stroke="#4b9abb"/></svg></div>
      <div class="combo"><span>几何</span><em><svg class="mid" width="10" height="8"><use href="#down"/></svg></em></div>
    </div>
  </footer>

  <aside class="meter">
    <svg class="mascot" width="56" height="60" viewBox="0 0 56 60"><path d="M18 3q12-6 24 3 12 10 8 30l4 12-12-4-16 6-10-16q-14 14-15 13 9-11 13-22-8 1-12-5 9 0 11-6z" fill="#d9c084"/><path d="M2 12l10 2 2 6-8-1z" fill="#c99a72"/><ellipse cx="31" cy="22" rx="10" ry="10" fill="#f7dcc4"/><path d="M18 17q2-12 14-12t15 14q-8-8-14-7-6 0-15 5z" fill="#e9d398"/><path d="M25 21h3M34 21h3" stroke="#6b4a32" stroke-width="2"/><path d="M29 26h5l-3 4z" fill="#d66058"/><path d="M22 32h19l3 15H20z" fill="#ecebe4"/><path d="M27 31h10l-3 4v8h-4v-8z" fill="#35414a"/><path d="M18 44q14-4 28 0l4 10q-18 8-36 0z" fill="#f6f5f2"/><path d="M14 53q18 8 36 0v4q-18 5-36 0z" fill="#7d8a78"/></svg>
    <div class="m up"><b>上传:</b> 0.27 KB</div><div class="m up"><b>下载:</b> 0.37 KB</div>
    <div class="m cpu">CPU: 11 %</div><div class="m mem"><b>内存:</b> 69 %</div>
  </aside>

  <div class="mark r1"></div><div class="mark r2"></div><div class="mark r3"></div><div class="mark r4"></div><div class="mark r5"></div>
  <div class="num n1">1</div><div class="num n2">2</div><div class="num n3">3</div><div class="num n4">4</div><div class="num n5">5</div>
</div>
</body>
</html>
```
FILE: styles.css
```css
* { box-sizing: border-box; }
body { margin: 0; font: 400 18px/24px "Noto Sans", "Noto Sans CJK SC", sans-serif; color: #45484a; }
p, h1, ul { margin: 0; padding: 0; }
svg { display: block; flex: none; }
i, em { font-style: normal; }
.defs { position: absolute; }
.app { position: relative; width: 2560px; height: 1540px; display: flex; flex-direction: column; overflow: hidden; background: #f8f9fc; }

/* title bar */
.titlebar { height: 42px; background: #dbe0df; display: flex; align-items: center; flex: none; }
.brand { width: 127px; height: 36px; border-right: 1px solid #b0b4b4; display: flex; align-items: center; padding-left: 17px; gap: 8px; flex: none; }
.brand-name { font: 400 29px/36px Lato, sans-serif; color: #55595b; height: 41px; white-space: nowrap; }
.brand-name i { font-size: 9px; vertical-align: 9px; }
.quick { display: grid; grid-template-columns: 43px 28px 46px 27px 27px 31px 24px 32px 40px 18px 38px 37px; justify-items: center; align-items: center; height: 36px; }
.quick-end { border-left: 1px solid #b0b4b4; height: 36px; width: 37px; display: flex; align-items: center; justify-content: center; }
.dim { color: #abb0b1; }
.mid { color: #5a5e60; }
.title { font-size: 20px; font-weight: 400; color: #babebf; margin-left: 567px; line-height: 40px; white-space: nowrap; }
.winctl { margin-left: auto; margin-right: 16px; }

/* menu tabs */
.menubar { height: 41px; background: #3e4545; display: flex; align-items: stretch; flex: none; color: #fff; font-size: 20px; line-height: 42px; }
.tab { padding: 0 33.5px; }
.tab.file { width: 100px; padding: 0 30px; background: linear-gradient(160deg, #67d045, #4f9d34); }
.tab.active { background: #f8f9fc; color: #3a7d24; margin-right: 7px; }
.menu-tools { margin-left: auto; margin-right: 5px; margin-top: 6px; }

/* ribbon */
.ribbon { height: 165px; background: #f8f9fc; border-bottom: 1px solid #aebdbc; display: flex; padding: 3px 0; flex: none; }
.group { border-right: 1px solid #b4b8ba; height: 158px; }
.body { height: 127px; display: grid; }
.caption { height: 31px; display: flex; align-items: center; justify-content: center; gap: 6px; color: #35383a; }
.caption svg { width: 10px; height: 8px; color: #5a5e60; }
.project { width: 243px; }
.project .body { grid-template-columns: 118px 85px 37px; }
.insert { width: 515px; }
.insert .body { grid-template-columns: 92px 70px 68px 92px 132px 52px; }
.mesh { width: 341px; }
.mesh .body { grid-template-columns: 92px 144px 104px; }
.solve { width: 237px; }
.solve .body { grid-template-columns: 68px 76px 92px; }
.results { width: 353px; }
.results .body { grid-template-columns: 82px 52px 68px 58px 92px; }
.tools { width: 141px; }
.help { width: 173px; }
.help .body { grid-template-columns: 92px 76px; }
.big { display: flex; flex-direction: column; align-items: center; padding-top: 7px; color: #adafb0; }
.big > svg:first-child { width: 48px; height: 48px; margin-bottom: 12px; }
.big b { font-weight: 400; white-space: nowrap; display: flex; align-items: center; gap: 6px; height: 24px; }
.big .arrow { width: 10px; height: 8px; color: #a9abac; }
.big > .arrow { margin-top: 8px; }
.big.dark, .mini.dark { color: #35383a; }
.dark .arrow { color: #5a5e60; }
.stack { display: grid; grid-template-rows: 40.5px 40.5px 40.5px; margin-top: -2px; align-items: center; }
.stack.icons { justify-items: center; }
.mini { display: flex; align-items: center; gap: 6px; padding-left: 10px; color: #adafb0; white-space: nowrap; }

/* workspace */
.workspace { display: flex; height: 1236px; flex: none; }
.sidebar { width: 584px; border-right: 4px solid #d9e0df; background: #f8f9fc; display: flex; flex-direction: column; flex: none; }
.side-tabs { height: 44px; background: #dbe0df; display: flex; align-items: stretch; }
.side-tab { display: flex; align-items: center; white-space: nowrap; }
.side-tab.on { width: 113px; background: #f9fafc; padding-left: 16px; gap: 10px; }
.folders { padding-left: 12px; gap: 6px; }
.favs { padding-left: 24px; gap: 9px; }
.fe { align-self: center; margin-left: 26px; }
.side-head { height: 42px; display: flex; align-items: center; padding-left: 42px; }
.side-head strong { font-weight: 700; width: 363px; color: #45484a; }
.a1 { margin-left: 14px; }
.listico { margin-left: 15px; }
.a2 { margin-left: 13px; }
.hideico { margin-left: 18px; }
.filter { height: 42px; display: flex; align-items: center; padding-left: 18px; }
.field { width: 461px; height: 42px; margin: 0 9px 0 6px; border: 1px solid #a3b0b0; background: #fff; display: flex; align-items: center; justify-content: flex-end; padding-right: 8px; }
.plus { margin-left: 18px; }
.tree { list-style: none; padding-top: 7px; }
.tree li { height: 32px; display: flex; align-items: center; padding-left: 46px; white-space: nowrap; }
.tree .root { padding-left: 18px; gap: 8px; }
.tree .exp { padding-left: 25px; }
.tree .datum { letter-spacing: .3px; }
.tri { width: 10px; height: 14px; margin-right: 11px; }
.ico { width: 23px; margin-right: 8px; }
.mk { margin-right: 2px; align-self: flex-start; margin-top: 4px; }
.insert-line { height: 3px; margin: 9px 7px 0 12px; background: linear-gradient(90deg, transparent, #1c8c1c 10%, #1c8c1c 90%, transparent); }

.viewport { position: relative; flex: 1; background: #e8e9ed; }
.scene { position: absolute; inset: 0; width: 1976px; height: 1236px; }
.viewbar { position: absolute; left: 754px; top: 7px; width: 468px; height: 46px; border: 1px solid #a0a4a6; background: #fbfbfd; display: flex; align-items: center; padding-left: 10px; gap: 10.300px; }
.viewbar svg { width: 28px; height: 26px; }

/* result dock */
.dock { position: absolute; left: 10px; top: 830px; width: 1953px; height: 396px; background: #efefef; border: 1px solid #d2d4d8; box-shadow: 3px 3px 18px rgba(0,0,0,.38); color: #111; display: flex; flex-direction: column; }
.dock-title { height: 44px; background: #fff; line-height: 43px; padding-left: 11px; }
.dock-tools { height: 44px; display: flex; align-items: center; padding: 0 0 1px 7px; color: #9b9b9b; flex: none; }
.dock-tools span { margin: 0 22px 0 7px; }
.stop { width: 18px; height: 19px; background: #9b9b9b; margin-right: 15px; }
.bar { width: 1px; height: 34px; background: #888; margin-right: 15px; }
.t2 { margin-left: 17px; }
.t3 { margin-left: 21px; }
.pin { margin-left: auto; }
.chev { margin-left: 13px; }
.redx { margin: 0 9px 0 13px; }
.log { height: 229px; background: #fff; border-left: 2px solid #666; border-top: 2px solid #666; border-right: 2px solid #666; margin: 0 1px 0 0; padding-right: 5px; flex: none; }
.log-in { border-right: 1px solid #e0e0e0; height: 227px; }
.log p { height: 28px; line-height: 27px; padding-left: 4px; border-bottom: 1px solid #ececec; }
.log p.h { border: 0; }
.log p span { letter-spacing: .5px; }
.dock-status { height: 36px; border: 1px solid #9c9c9c; margin: 0 1px 0 0; background: linear-gradient(#fdfdfd, #cdcdcd); line-height: 31px; padding-left: 2px; flex: none; }
.dock-tabs { margin-top: 2px; border-top: 1px solid #8c8c8c; height: 39px; }
.dock-tab { width: 113px; height: 37px; background: #fff; border: 1px solid #8c8c8c; border-top: 0; display: flex; align-items: center; gap: 7px; padding-left: 6px; font-weight: 700; white-space: nowrap; letter-spacing: -.1px; }

/* dialog */
.dialog { position: absolute; left: 1229px; top: 102px; width: 402px; height: 890px; border: 1px solid #fff; border-bottom-color: #9c9ea0; background: #eef0f2; padding: 2px; box-shadow: 0 3px 14px rgba(0,0,0,.4); display: flex; flex-direction: column; }
.dlg-title { height: 42px; background: #e6e8e9; display: flex; align-items: center; justify-content: center; color: #9fa1a3; padding-top: 2px; flex: none; }
.dlg-title svg { margin: 0 -147px 0 134px; }
.dlg-body { background: #fbfbfb; height: 784px; padding-top: 3px; flex: none; }
.sec { height: 48px; background: #c6c9cc; display: flex; gap: 13px; padding: 3px 0 0 6px; color: #1c1c1c; }
.sec svg { margin-top: 16px; }
.table { margin: 7px 4px 10px; height: 344px; background: #aaa; border-top: 2px solid #6a6a6a; border-left: 2px solid #6a6a6a; color: #000; }
.cells { height: 79px; background: #fff; border-bottom: 1px solid #666; display: flex; }
.c1 { width: 335px; border-right: 1px solid #ddd; padding: 6px 0 0 4px; }
.c1 p { height: 24px; display: flex; align-items: center; }
.c1 .r2 { margin-top: 15px; gap: 6px; }
.c1 .r2 svg + svg { margin-right: 2px; }
.c2 { padding: 39px 0 0 16px; }
.radios { height: 75px; padding: 6px 0 0 3px; }
.radios label { display: flex; align-items: center; height: 30px; gap: 10px; }
.radio { width: 18px; height: 18px; border: 2px solid #7a7a7a; border-radius: 50%; background: #fff; }
.radio.sel { background: radial-gradient(circle, #2c2c2c 4.5px, #fff 5.3px); }
.checks { padding: 1px 0 0 3px; }
.checks label { display: flex; align-items: center; height: 33px; gap: 10px; }
.box { width: 18px; height: 18px; border: 1px solid #666; background: #fff; }
.actions { padding: 21px 0 0 99px; }
.btn { width: 198px; height: 34px; border: 1px solid #adafb1; background: #f8f8f9; display: flex; align-items: center; justify-content: center; }
.btn.first { margin-bottom: 8px; padding-right: 7px; }
.dlg-foot { flex: 1; margin-top: 6px; border-top: 1px solid #c4c7ca; padding: 6px 3px 0 0; display: flex; justify-content: flex-end; }
.btn.close { width: 60px; height: 42px; padding: 4px 2px 0 0; }

/* status bar */
.status { height: 56px; border-top: 1px solid #aebdbc; background: #f6fafb; display: flex; justify-content: space-between; flex: none; position: relative; }
.st-left, .st-right { display: flex; align-items: flex-start; }
.st-btn { width: 32px; height: 32px; margin: 17px 10px 0 9px; background: #dfe0e2; border: 1px solid #a9acae; display: flex; align-items: center; justify-content: flex-end; padding-right: 3px; }
.globe { margin-top: 20px; }
.pane { width: 24px; height: 24px; margin: 21px 17px 0 12px; border: 1.500px solid #2a7294; background: linear-gradient(#fff, #cfdbe0); border-radius: 2px; }
.vsep { width: 1px; height: 32px; background: #b4b8ba; margin-top: 17px; }
.bullet { width: 8px; height: 8px; border-radius: 50%; background: #15658a; margin: 18px 7px 0 9px; }
.msg { font-size: 16px; margin-top: 11px; letter-spacing: .1px; white-space: nowrap; }
.ln { width: 1px; height: 44px; background: #b4b8ba; margin-top: 5px; }
.l2 { margin-left: 60px; }
.find { display: flex; margin: 7px 3px 0; width: 63px; height: 36px; border: 1px solid #b4b8ba; background: #fafbfc; }
.find span { width: 41px; display: flex; align-items: center; justify-content: center; border-right: 1px solid #b4b8ba; }
.find em, .combo em { flex: 1; display: flex; align-items: center; justify-content: center; }
.viewbtn { margin: 7px 142px 0 3px; width: 60px; height: 42px; border: 1px solid #adb1b3; background: #f8f8f9; display: flex; align-items: center; justify-content: center; }
.combo { display: flex; margin: 11px 27px 0 0; width: 258px; height: 34px; border: 1px solid #a4a9ab; background: #fafafb; line-height: 32px; }
.combo span { width: 234px; padding-left: 9px; border-right: 1px solid #a4a9ab; }

/* floating system meter */
.meter { position: absolute; left: 2230px; top: 100px; width: 330px; height: 64px; border: 2px solid #98cc84; border-radius: 9px; background: linear-gradient(#e0f4c8, #f6fdee 35%, #f6fdee 70%, #e4f6d0); display: grid; grid-template-columns: 163px 160px; grid-template-rows: 28px 28px; padding: 4px 0 0 8px; }
.mascot { position: absolute; right: -4px; top: 0; opacity: .85; }
.m { position: relative; font: 700 22px/28px "Liberation Mono", "Noto Sans CJK SC", monospace; letter-spacing: -1.200px; white-space: pre; }
.m b { font: 500 22px/28px "Liberation Mono", "Noto Sans CJK SC", monospace; letter-spacing: 0; }
.up { color: #2c6a38; }
.cpu { color: #fd7f9c; }
.mem { color: #cc2c68; }

/* step callouts */
.mark { position: absolute; border: 7px solid #fc3838; }
.r1 { left: 1026px; top: 29px; width: 151px; height: 56px; }
.r2 { left: 1689px; top: 80px; width: 156px; height: 56px; }
.r3 { left: 1798px; top: 856px; width: 113px; height: 40px; }
.r4 { left: 1900px; top: 1095px; width: 235px; height: 50px; }
.r5 { left: 581px; top: 1165px; width: 330px; height: 176px; }
.num { position: absolute; width: 30px; height: 30px; border-radius: 50%; background: #fc3838; color: #fff; font-size: 19px; line-height: 29px; text-align: center; }
.n1 { left: 1084px; top: 87px; }
.n2 { left: 1655px; top: 119px; }
.n3 { left: 1748px; top: 859px; }
.n4 { left: 1836px; top: 1109px; }
.n5 { left: 921px; top: 1221px; }
```
